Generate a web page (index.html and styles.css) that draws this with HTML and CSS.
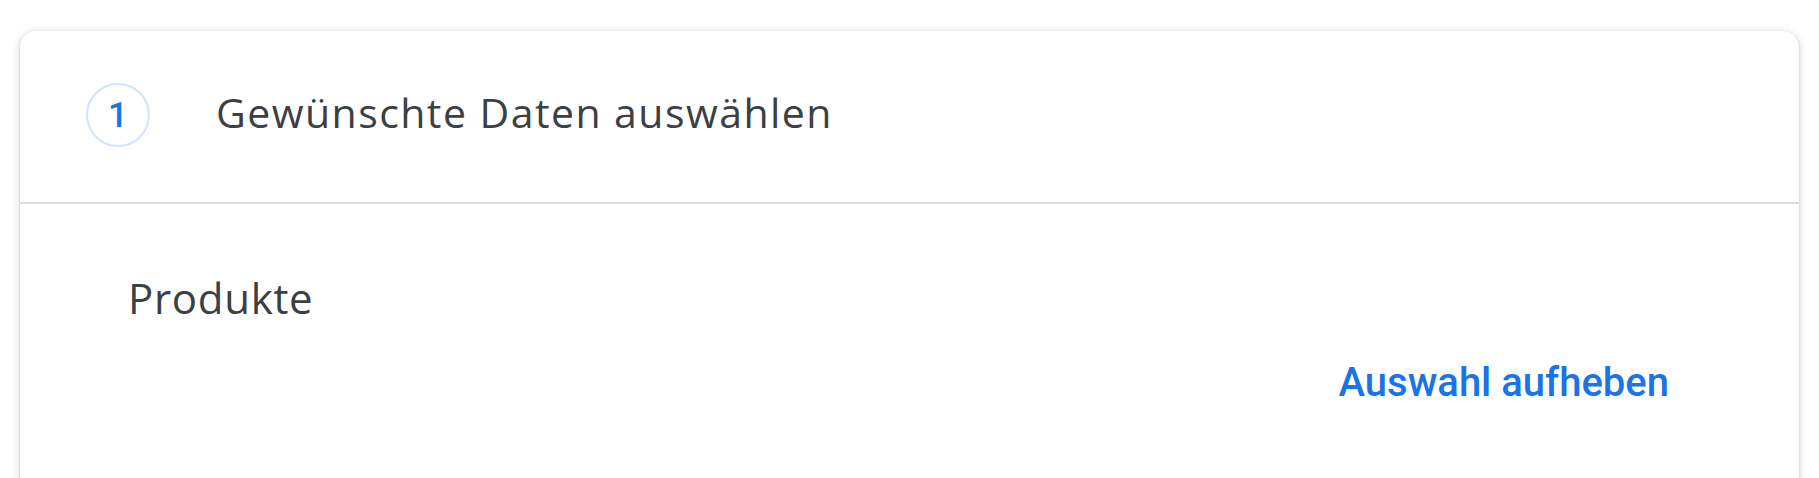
FILE: index.html
```html
<!DOCTYPE html>
<html lang="de">
<head>
<meta charset="utf-8">
<title>Daten auswählen</title>
<link rel="stylesheet" href="styles.css">
</head>
<body>
<main class="page">
  <section class="card">
    <header class="step-header">
      <div class="step-num">1</div>
      <h1 class="step-title">Gewünschte Daten auswählen</h1>
    </header>
    <div class="step-body">
      <h2 class="section-title">Produkte</h2>
      <div class="actions">
        <a class="link-btn" href="#">Auswahl aufheben</a>
      </div>
    </div>
  </section>
</main>
</body>
</html>
```

FILE: styles.css
```css
html, body {
  margin: 0;
  padding: 0;
  background: #ffffff;
}

body {
  font-family: "Open Sans", Roboto, "Liberation Sans", sans-serif;
  color: #3c4043;
  overflow: hidden;
}

.page {
  padding: 31px 20px 0;
}

.card {
  background: #fff;
  border-radius: 16px;
  box-shadow: 0 1px 2px 0 rgba(60, 64, 67, 0.3), 0 2px 6px 2px rgba(60, 64, 67, 0.15);
  min-height: 600px;
}

.step-header {
  display: flex;
  align-items: center;
  gap: 66px;
  padding: 52px 66px 55px;
  border-bottom: 2px solid #dadce0;
}

.step-num {
  width: 60px;
  height: 60px;
  border: 2px solid #d2e3fc;
  border-radius: 50%;
  display: flex;
  align-items: center;
  justify-content: center;
  color: #1a73e8;
  font-family: Roboto, "Open Sans", sans-serif;
  font-size: 35px;
  font-weight: 500;
  flex: none;
}

.step-title {
  margin: 0;
  padding: 0 0 7px;
  font-size: 41px;
  line-height: 56px;
  font-weight: 400;
  letter-spacing: 1.45px;
  color: #3c4043;
}

.step-body {
  padding: 66px 112px 0 108px;
}

.section-title {
  margin: 0;
  font-size: 42px;
  line-height: 56px;
  font-weight: 400;
  letter-spacing: 0.7px;
  color: #3c4043;
}

.actions {
  display: flex;
  justify-content: flex-end;
  margin-top: 29px;
}

.link-btn {
  color: #1a73e8;
  text-decoration: none;
  font-family: Roboto, "Open Sans", sans-serif;
  font-size: 40px;
  line-height: 56px;
  font-weight: 500;
  padding: 0 18px;
}
```
